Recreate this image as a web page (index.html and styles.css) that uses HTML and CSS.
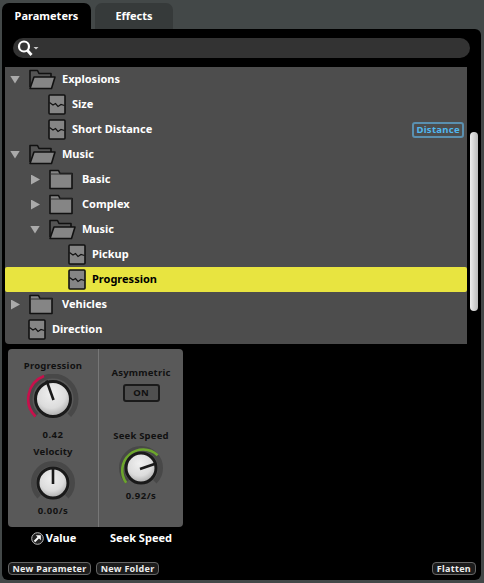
FILE: index.html
```html
<!DOCTYPE HTML>
<html>
  <head>
    <meta http-equiv="content-type" content="text/html; charset=utf-8">
    <title>Parameters</title>
    <link rel="stylesheet" href="styles.css">
  </head>
  <body>
    <svg class="defs" width="0" height="0">
      <defs>
        <radialGradient id="knobfill" cx="45%" cy="35%" r="75%">
          <stop offset="0%" stop-color="#f0f0f0"/>
          <stop offset="55%" stop-color="#dcdcdc"/>
          <stop offset="100%" stop-color="#989898"/>
        </radialGradient>
        <symbol id="folder" viewBox="0 0 24 21">
          <path d="M1 19.5V1.5H9.5L11 4.5H23V19.5Z" fill="#858585" stroke="#111" stroke-width="1.6" stroke-linejoin="round"/>
          <path d="M1.5 5H23" stroke="#333" stroke-width="1"/>
        </symbol>
        <symbol id="folderopen" viewBox="0 0 27 21">
          <path d="M1 18V1.5H8.5L10 4.5H22V8" fill="#555" stroke="#111" stroke-width="1.6" stroke-linejoin="round"/>
          <path d="M5 8H26L22.5 19.5H1Z" fill="#858585" stroke="#111" stroke-width="1.6" stroke-linejoin="round"/>
        </symbol>
        <symbol id="param" viewBox="0 0 18 21">
          <rect x="1" y="1" width="16" height="19" rx="1" fill="#858585" stroke="#111" stroke-width="1.6"/>
          <path d="M1.5 8.5L5 11L7.5 9.5L10 12.5L13 10.5L16.5 11.5" fill="none" stroke="#111" stroke-width="1.2"/>
        </symbol>
      </defs>
    </svg>

    <div class="tabs">
      <div class="tab active">Parameters</div>
      <div class="tab">Effects</div>
    </div>

    <div class="panel">
      <div class="search">
        <svg width="24" height="18" viewBox="0 0 24 18">
          <circle cx="8" cy="7.5" r="5" fill="none" stroke="#fff" stroke-width="2.2"/>
          <path d="M11.5 11.5L15.5 16" stroke="#fff" stroke-width="2.8"/>
          <path d="M17.5 8H22.5L20 10.5Z" fill="#ccc"/>
        </svg>
      </div>

      <div class="browser">
        <ul class="tree">
          <li class="row d0"><span class="tri down"></span><svg class="open" width="27" height="21"><use href="#folderopen"/></svg><span class="name">Explosions</span></li>
          <li class="row d1 leaf"><svg class="param" width="18" height="21"><use href="#param"/></svg><span class="name">Size</span></li>
          <li class="row d1 leaf"><svg class="param" width="18" height="21"><use href="#param"/></svg><span class="name">Short Distance</span><span class="badge">Distance</span></li>
          <li class="row d0"><span class="tri down"></span><svg class="open" width="27" height="21"><use href="#folderopen"/></svg><span class="name">Music</span></li>
          <li class="row d1"><span class="tri right"></span><svg class="closed" width="24" height="21"><use href="#folder"/></svg><span class="name">Basic</span></li>
          <li class="row d1"><span class="tri right"></span><svg class="closed" width="24" height="21"><use href="#folder"/></svg><span class="name">Complex</span></li>
          <li class="row d1"><span class="tri down"></span><svg class="open" width="27" height="21"><use href="#folderopen"/></svg><span class="name">Music</span></li>
          <li class="row d2 leaf"><svg class="param" width="18" height="21"><use href="#param"/></svg><span class="name">Pickup</span></li>
          <li class="row d2 leaf selected"><svg class="param" width="18" height="21"><use href="#param"/></svg><span class="name">Progression</span></li>
          <li class="row d0"><span class="tri right"></span><svg class="closed" width="24" height="21"><use href="#folder"/></svg><span class="name">Vehicles</span></li>
          <li class="row d0 leaf"><svg class="param" width="18" height="21"><use href="#param"/></svg><span class="name">Direction</span></li>
        </ul>
        <div class="scrollbar"><div class="thumb"></div></div>
      </div>

      <div class="controls">
        <div class="col col-value">
          <div class="label label-progress">Progression</div>
          <svg class="knob knob-progress" width="54" height="50" viewBox="0 0 54 50">
            <path d="M10.7 41.3A23 23 0 1 1 43.3 41.3" fill="none" stroke="#484848" stroke-width="5"/>
            <path d="M9.5 42.5A24.7 24.7 0 0 1 18 2" fill="none" stroke="#c8104c" stroke-width="2.6"/>
            <circle cx="27" cy="25" r="17.5" fill="url(#knobfill)" stroke="#1a1a1a" stroke-width="3"/>
            <path d="M27.5 26L20.5 6.5" stroke="#1a1a1a" stroke-width="2.6"/>
          </svg>
          <div class="val val-progress">0.42</div>
          <div class="label label-velocity">Velocity</div>
          <svg class="knob knob-velocity" width="46" height="44" viewBox="0 0 46 44">
            <path d="M9.2 35.8A19.5 19.5 0 1 1 36.8 35.8" fill="none" stroke="#484848" stroke-width="5"/>
            <circle cx="23" cy="22" r="15" fill="url(#knobfill)" stroke="#1a1a1a" stroke-width="3"/>
            <path d="M23 23V6" stroke="#1a1a1a" stroke-width="2.6"/>
          </svg>
          <div class="val val-velocity">0.00/s</div>
        </div>
        <div class="col col-seek">
          <div class="label label-asym">Asymmetric</div>
          <div class="toggle">ON</div>
          <div class="label label-seek">Seek Speed</div>
          <svg class="knob knob-seek" width="46" height="44" viewBox="0 0 46 44">
            <path d="M9.2 35.8A19.5 19.5 0 1 1 36.8 35.8" fill="none" stroke="#484848" stroke-width="5"/>
            <path d="M8.2 36.8A21 21 0 0 1 39.6 9.2" fill="none" stroke="#6ca52c" stroke-width="2.6"/>
            <circle cx="23" cy="22" r="15" fill="url(#knobfill)" stroke="#1a1a1a" stroke-width="3"/>
            <path d="M22 23L38 17.5" stroke="#1a1a1a" stroke-width="2.6"/>
          </svg>
          <div class="val val-seek">0.92/s</div>
        </div>
      </div>

      <div class="captions">
        <div class="caption caption-value">
          <svg width="13" height="13" viewBox="0 0 13 13">
            <circle cx="6.5" cy="6.5" r="5.8" fill="#222" stroke="#bbb" stroke-width="1"/>
            <path d="M3.5 9.5L7.5 5.5" stroke="#fff" stroke-width="2"/>
            <path d="M4.8 3.2H9.8V8.2Z" fill="#fff"/>
          </svg>
          Value
        </div>
        <div class="caption caption-seek">Seek Speed</div>
      </div>

      <div class="footer">
        <a class="btn">New Parameter</a>
        <a class="btn">New Folder</a>
        <a class="btn btn-flatten">Flatten</a>
      </div>
    </div>
  </body>
</html>
```

FILE: styles.css
```css
html, body{margin:0; padding:0;}
body{width:484px; height:583px; overflow:hidden; background:#434848; font-family:"Noto Sans", sans-serif; font-weight:bold; color:#fff;}
.defs{position:absolute;}

.tabs{display:flex; gap:4px; padding:3px 0 0 2px; height:26px;}
.tab{width:78px; height:26px; line-height:25px; text-align:center; font-size:11px; background:#363a3a; border-radius:7px 7px 0 0;}
.tab.active{width:89px; background:#000;}

.panel{width:479px; height:551px; margin-left:2px; box-sizing:border-box; padding-top:9px; background:#000; border-radius:0 6px 6px 6px; display:flex; flex-direction:column;}
.search{height:20px; margin:0 11px 9px 11px; background:#333; border-radius:10px; padding-left:3px; display:flex; align-items:center;}

.browser{display:flex; height:277px;}
.tree{list-style:none; margin:0 0 0 3px; padding:0; width:462px; height:277px; background:#4d4d4d; border-radius:0 0 0 4px;}
.row{height:25px; display:flex; align-items:center; font-size:11px;}
.row.d0{padding-left:5px;}
.row.d1{padding-left:25px;}
.row.d2{padding-left:45px;}
.row svg{flex:none;}
.selected{background:#e8e440; color:#000; border-radius:2px;}
.tri{width:19px; flex:none;}
.tri::before{content:""; display:block; background:#aaa;}
.tri.down::before{width:10px; height:8px; clip-path:polygon(0 0, 100% 0, 50% 100%);}
.tri.right::before{width:9px; height:10px; margin-left:1px; clip-path:polygon(0 0, 100% 50%, 0 100%);}
.open{margin-right:6px;}
.closed{margin-right:9px;}
.param{margin-left:18px; margin-right:6px;}
.name{flex:1; padding-bottom:2px;}
.badge{margin-right:3px; height:12px; line-height:12px; padding:0 2px; border:2px solid #5a90b0; border-radius:3px; color:#50b8f0; font-size:9.5px; letter-spacing:0.3px; flex:none;}
.scrollbar{margin-left:3px; width:8px; padding-top:65px;}
.thumb{height:179px; border-radius:4px; background:linear-gradient(to right, #eee, #bbb);}

.controls{display:flex; width:175px; height:178px; margin:5px 0 0 6px; background:#595959; border-radius:4px; color:#111; font-size:9.5px; letter-spacing:0.2px;}
.col{display:flex; flex-direction:column; align-items:center;}
.col-value{width:91px; box-sizing:border-box; border-right:1px solid #777;}
.col-seek{flex:1;}
.label, .val{line-height:14px;}
.val{letter-spacing:0.5px;}
.knob{display:block;}
.label-progress{margin-top:10px;}
.knob-progress{margin-top:1px;}
.val-progress{margin-top:4px;}
.label-velocity{margin-top:3px;}
.knob-velocity{margin-top:2px;}
.val-velocity{margin-top:-1px;}
.label-asym{margin-top:17px;}
.toggle{width:37px; height:18px; box-sizing:border-box; line-height:14px; margin-top:4px; text-align:center; border:2px solid #1a1a1a; border-radius:3px; background:#505050;}
.label-seek{margin-top:27px;}
.knob-seek{margin-top:3px;}
.val-seek{margin-top:-1px;}

.captions{display:flex; margin:2px 0 0 6px; font-size:11px; height:18px; line-height:18px;}
.caption{display:flex; align-items:center; justify-content:center;}
.caption-value{width:91px; gap:2px;}
.caption-seek{width:84px;}

.footer{display:flex; gap:5px; margin:auto 5px 5px 6px; font-size:9px; letter-spacing:0.3px;}
.btn{height:13px; line-height:11px; padding:0 3.5px; box-sizing:border-box; border:1px solid #666; border-radius:4px; background:#1c1c1c; color:#eee;}
.btn-flatten{margin-left:auto; padding:0 4px;}
```
